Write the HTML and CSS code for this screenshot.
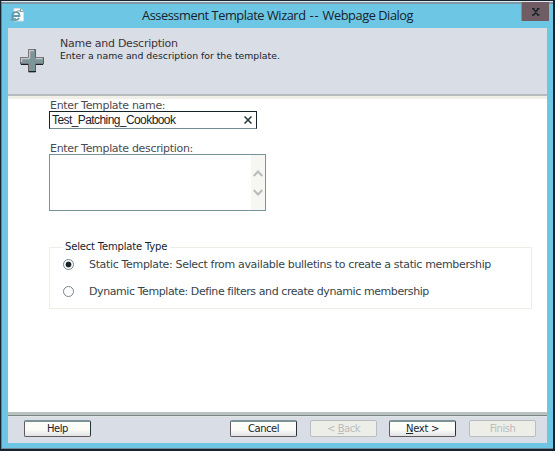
FILE: index.html
```
<!DOCTYPE html>
<html lang="en">
<head>
<meta charset="utf-8">
<title>Assessment Template Wizard</title>
<link rel="stylesheet" href="styles.css">
</head>
<body>
<div class="window">
  <header class="titlebar">
    <svg class="page-icon" viewBox="0 0 15 15" width="15" height="15">
      <path d="M4 .5h6.500l3 3v9.500h-9.500z" fill="#fff" stroke="#d3dcde"/>
      <path d="M10.500 .5v3h3" fill="none" stroke="#8b989b"/>
      <path d="M2 8h7.500C9.500 2.500 2.500 3 2.200 8s5 5 7 2" fill="none" stroke="#5f9cac" stroke-width="1.800"/>
      <path d="M1 11C-.5 13 3 12.500 6 10M6 4c3-2 5-2 4 0" fill="none" stroke="#779299"/>
    </svg>
    <h1 class="title">Assessment Template Wizard <span class="dashes">--</span> Webpage Dialog</h1>
    <button class="close" aria-label="Close"><svg viewBox="0 0 8 8" width="8" height="8"><path d="M0 .5h2.500M5 .5h2.500M0 7h2.500M5 7h2.500M1.500 1l4.500 6M6 1L1.500 7" fill="none" stroke="#17232b" stroke-width="1.400"/></svg></button>
  </header>
  <div class="content">
    <section class="banner">
      <svg class="plus" viewBox="0 0 25 24" width="25" height="24">
        <path d="M8.500 .5h7v8h8v6.500h-8v8h-7v-8h-8V8.500h8z" fill="#7d9599" stroke="#66595e"/>
        <path d="M9.500 9.500h-8V13M9.500 9.500v-8H14M16 9.500h6.500" fill="none" stroke="#c2c9cb" stroke-width="1.500"/>
        <path d="M9 22.500h7M1 15.500h7M16 15.500h7" fill="none" stroke="#172228"/>
      </svg>
      <div class="heading">
        <h2>Name and Description</h2>
        <p>Enter a name and description for the template.</p>
      </div>
    </section>
    <main class="form">
      <label class="label">Enter Template name:</label>
      <div class="name-box"><span>Test_Patching_Cookbook</span>
        <svg viewBox="0 0 8 8" width="8" height="8"><path d="M.5 .5l7 7M7.500 .5l-7 7" stroke="#26343a" stroke-width="1.500"/></svg>
      </div>
      <label class="label desc-label">Enter Template description:</label>
      <div class="desc-box">
        <div class="scroller">
          <svg viewBox="0 0 10 7" width="10" height="7"><path d="M.7 6L5 1.500 9.300 6" fill="none" stroke="#b5bcbc" stroke-width="2"/></svg>
          <svg viewBox="0 0 10 7" width="10" height="7"><path d="M.7 1L5 5.500 9.300 1" fill="none" stroke="#b5bcbc" stroke-width="2"/></svg>
        </div>
      </div>
      <fieldset class="types">
        <legend>Select Template Type</legend>
        <div class="choice"><i class="radio on"></i><span class="static">Static Template: Select from available bulletins to create a static membership</span></div>
        <div class="choice"><i class="radio"></i><span class="dynamic">Dynamic Template: Define filters and create dynamic membership</span></div>
      </fieldset>
    </main>
    <footer class="actions">
      <button class="btn help">Help</button>
      <button class="btn">Cancel</button>
      <button class="btn off"><span>&lt; <u>B</u>ack</span></button>
      <button class="btn next"><span><u>N</u>ext &gt;</span></button>
      <button class="btn off">Finish</button>
    </footer>
  </div>
</div>
</body>
</html>
```
FILE: styles.css
```
* { box-sizing: border-box; }
body {
  margin: 0;
  width: 555px;
  height: 451px;
  overflow: hidden;
  background: #17232f;
  font-family: "DejaVu Sans", Verdana, sans-serif;
  font-size: 11px;
  color: #26343a;
}
h1, h2, p { margin: 0; font-weight: 400; white-space: nowrap; }
button { font: inherit; color: inherit; padding: 0; }
.window {
  margin: 1px 2px 2px 1px;
  height: 448px;
  border-top: 1px solid #e2e9ee;
  border-left: 1px solid #6b838d;
  border-bottom: 1px solid #728b94;
  background: #6cc6e4;
  padding: 0 6px 5px;
}
.titlebar {
  display: flex;
  height: 26px;
  margin: 0 -6px;
  padding: 0 4px 0 8px;
  border-top: 2px solid #7e99a5;
}
.page-icon { margin-top: 4px; }
.title {
  flex: 1;
  padding-left: 117px;
  font: 12.8px/23px "Open Sans", sans-serif;
  letter-spacing: -.44px;
  color: #17232b;
}
.dashes { letter-spacing: 1px; margin: 0 0 0 1px; }
.close {
  width: 28px;
  height: 19px;
  margin-top: -2px;
  border: 0;
  border-left: 1px solid #7f8e94;
  background: #6f5d63;
  display: flex;
  align-items: center;
  justify-content: center;
}
.content { width: 539px; height: 415px; display: flex; flex-direction: column; background: #fff; }
.banner {
  display: flex;
  height: 68px;
  background: #d9dde5;
  border-bottom: 2px solid #b5babd;
  padding-left: 12px;
}
.plus { margin-top: 21px; }
.heading { padding: 9px 0 0 15px; }
.heading h2 { font-size: 11px; line-height: 13px; letter-spacing: -.25px; color: #3c3437; }
.heading p { font-size: 9.3px; line-height: 12px; color: #17232b; }
.form { flex: 1; border-top: 3px solid #f0f0e9; padding: 0 15px 0 41px; white-space: nowrap; }
.label { display: block; height: 12px; line-height: 14px; letter-spacing: -.32px; color: #4a4a50; padding-left: 1px; }
.name-box {
  width: 208px; height: 18px;
  border: 1px solid #17232b;
  border-bottom-color: #728b8e;
  display: flex; align-items: center; justify-content: space-between;
  padding: 0 4px 0 2px;
  font: 12px/16px "Liberation Sans", sans-serif;
  letter-spacing: -.58px;
  color: #17232b;
}
.desc-label { margin-top: 13px; }
.desc-box {
  width: 217px; height: 57px;
  border: 1px solid #78949a;
  display: flex; justify-content: flex-end;
}
.scroller {
  width: 14px; background: #f6f6f3;
  display: flex; flex-direction: column; align-items: center;
  gap: 12px; padding-top: 15px;
}
.types {
  margin: 30px 0 0;
  width: 483px; height: 68px;
  padding: 0 0 0 13px;
  border: 1px solid #eeeee6;
}
legend { padding: 0 3px 0 2px; font-size: 10px; line-height: 12px; letter-spacing: -.18px; color: #17232b; }
.choice { display: flex; align-items: center; height: 27px; margin-top: -2px; }
.choice + .choice { margin-top: 0; }
.choice span { margin-left: 15px; color: #36444a; }
.static { letter-spacing: -.34px; }
.dynamic { letter-spacing: -.42px; }
.radio { width: 11px; height: 11px; border: 1px solid #748488; border-radius: 50%; background: #fff; }
.radio.on { background: radial-gradient(circle, #17232b 0 2.500px, #fff 3.300px); }
.actions {
  display: flex;
  height: 31px;
  border-top: 3px solid #b8c2c0;
  box-shadow: inset 0 1px #788783, inset 0 2px #dfe5e5;
  background: #d9dde5;
  padding: 5px 11px 0 16px;
  gap: 13px;
}
.btn {
  width: 67px; height: 17px;
  border: 1px solid #26343a;
  border-top: 2px solid #7b9296;
  border-left-color: #66595e;
  border-bottom-color: #66595e;
  border-radius: 2px;
  background: linear-gradient(#fbfbf8 55%, #e0e4e4);
  font-size: 10px; line-height: 14px;
  letter-spacing: -.5px;
  color: #17232b;
}
.help { margin-right: auto; }
.next { margin-left: -1px; letter-spacing: -.3px; }
.off { border: 1px solid #b8bdbd; background: #eeeee8; color: #b8bdbd; }
```
